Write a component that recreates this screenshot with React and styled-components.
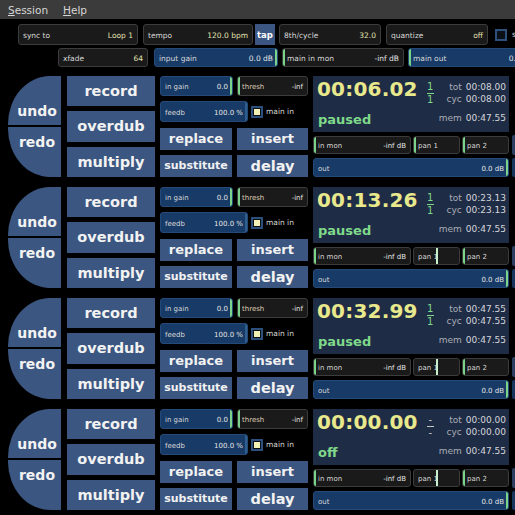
import React from 'react'
import styled, { createGlobalStyle } from 'styled-components'

const GlobalStyle = createGlobalStyle`
  html, body {
    margin: 0;
    padding: 0;
    background: #000;
    overflow: hidden;
  }
  body {
    font-family: "DejaVu Sans", "Noto Sans", sans-serif;
  }
`

const Window = styled.div`
  width: 515px;
  height: 515px;
  overflow: hidden;
  background: #000;
  display: flex;
  flex-direction: column;
`

const MenuBar = styled.div`
  flex: 0 0 19px;
  background: #3b3b3b;
  display: flex;
  align-items: center;
  gap: 15px;
  padding-left: 8px;
  font-size: 10.5px;
  color: #d6d6d6;

  u {
    text-decoration: underline;
    text-underline-offset: 1px;
  }
`

const Controls = styled.div`
  display: flex;
  flex-direction: column;
  gap: 3px;
  padding-top: 5px;
`

const ControlRow = styled.div`
  display: flex;
  align-items: center;
  flex: 0 0 ${(p) => p.$h}px;
  height: ${(p) => p.$h}px;
  padding-left: ${(p) => p.$indent}px;
  gap: 5px;
`

const SliderBox = styled.div`
  position: relative;
  flex: 0 0 ${(p) => p.$w}px;
  width: ${(p) => p.$w}px;
  height: 100%;
  box-sizing: border-box;
  border: 1px solid ${(p) => (p.$blue ? '#244a7a' : '#3c3c3c')};
  border-radius: 3px;
  background: ${(p) => (p.$blue ? '#173a66' : '#1a1a1a')};
  display: flex;
  align-items: center;
  justify-content: space-between;
  padding: 2px 4px 0 4px;
  font-size: ${(p) => p.$fs || 7.5}px;
  color: #d8d8d8;
  overflow: hidden;
  white-space: nowrap;
  margin-left: ${(p) => p.$ml || 0}px;
`

const SliderLabel = styled.span`
  position: relative;
  color: ${(p) => p.$tint || '#d8d8d8'};
`

const SliderValue = styled.span`
  position: relative;
  color: ${(p) => p.$tint || '#e4e4e4'};
`

const Marker = styled.span`
  position: absolute;
  top: 0;
  bottom: 0;
  width: 2px;
  background: ${(p) => p.$color || '#7bd389'};
`

const TapButton = styled.div`
  flex: 0 0 20px;
  height: 100%;
  background: #3b5680;
  color: #fff;
  font-weight: bold;
  font-size: 8.5px;
  display: flex;
  align-items: center;
  justify-content: center;
  margin: 0 -1px 0 -3px;
`

const Check = styled.span`
  flex: 0 0 12px;
  width: 12px;
  height: 12px;
  box-sizing: border-box;
  border: 2px solid #2c4f7c;
  background: #0c1016;
  display: flex;
  align-items: center;
  justify-content: center;
  margin-left: ${(p) => p.$ml || 0}px;

  &::after {
    content: '';
    width: 6px;
    height: 6px;
    background: ${(p) => (p.$on ? '#f2f2b4' : 'transparent')};
  }
`

const CheckLabel = styled.span`
  font-size: 7.5px;
  color: #d8d8d8;
  white-space: nowrap;
`

const LoopList = styled.div`
  display: flex;
  flex-direction: column;
  gap: 10px;
  margin-top: 9px;
`

const Loop = styled.div`
  display: flex;
  flex: 0 0 101px;
  height: 101px;
  padding-left: 8px;
`

const UndoColumn = styled.div`
  flex: 0 0 53px;
  display: flex;
  flex-direction: column;
  gap: 2px;
`

const UndoButton = styled.div`
  flex: 1;
  background: #3b5680;
  color: #f2f2f2;
  font-weight: bold;
  font-size: 14px;
  display: flex;
  justify-content: center;
  padding-left: 5px;
  align-items: ${(p) => (p.$bottom ? 'flex-start' : 'flex-end')};
  padding-top: ${(p) => (p.$bottom ? 7 : 0)}px;
  padding-bottom: ${(p) => (p.$bottom ? 0 : 6)}px;
  border-top-left-radius: ${(p) => (p.$bottom ? '0' : '42px 48px')};
  border-bottom-left-radius: ${(p) => (p.$bottom ? '42px 48px' : '0')};
`

const MainButtons = styled.div`
  flex: 0 0 88px;
  margin-left: 6px;
  display: flex;
  flex-direction: column;
  gap: 5px;
`

const Button = styled.div`
  flex: ${(p) => (p.$w ? `0 0 ${p.$w}px` : 1)};
  background: #3b5680;
  color: #f2f2f2;
  font-weight: bold;
  font-size: ${(p) => p.$fs || 14.5}px;
  display: flex;
  align-items: center;
  justify-content: center;
  white-space: nowrap;
  height: 100%;
  box-sizing: border-box;
`

const MiddleColumn = styled.div`
  flex: 0 0 148px;
  margin-left: 5px;
  display: flex;
  flex-direction: column;
  justify-content: space-between;
`

const MiddleRow = styled.div`
  display: flex;
  align-items: center;
  flex: 0 0 ${(p) => p.$h}px;
  height: ${(p) => p.$h}px;
  gap: ${(p) => p.$gap ?? 4}px;
`

const RightColumn = styled.div`
  flex: 0 0 196px;
  margin-left: 5px;
  display: flex;
  flex-direction: column;
  gap: 4px;
`

const TimePanel = styled.div`
  flex: 0 0 56px;
  background: #1f2c46;
  display: flex;
  justify-content: space-between;
  box-sizing: border-box;
  padding: 3px 3px 0 4px;
`

const TimeLeft = styled.div`
  display: flex;
  flex-direction: column;
`

const TimeLine = styled.div`
  display: flex;
  align-items: flex-start;
  gap: 9px;
`

const Clock = styled.span`
  font-size: 20px;
  line-height: 21px;
  font-weight: bold;
  color: #e8e88c;
  letter-spacing: 0.2px;
`

const Fraction = styled.span`
  display: flex;
  flex-direction: column;
  align-items: center;
  font-size: 10px;
  line-height: 10px;
  color: ${(p) => (p.$empty ? '#c8c8c8' : '#7fd98a')};
  padding-top: 3px;

  i {
    display: block;
    width: 7px;
    height: 1px;
    margin: 1px 0;
    background: ${(p) => (p.$empty ? '#c8c8c8' : '#7fd98a')};
  }
`

const LoopState = styled.span`
  font-size: 13px;
  font-weight: bold;
  color: #7fd98a;
  margin-top: 7px;
  padding-left: 1px;
`

const Info = styled.div`
  display: grid;
  grid-template-columns: auto auto;
  grid-template-rows: 12px 12px 12px;
  column-gap: 4px;
  row-gap: 0;
  align-items: center;
  justify-items: end;
  padding-top: 2px;
  font-size: 9px;
`

const InfoLabel = styled.span`
  color: #a9adb5;
  margin-top: ${(p) => p.$gapTop || 0}px;
`

const InfoValue = styled.span`
  color: #d4d6da;
  margin-top: ${(p) => p.$gapTop || 0}px;
`

const MixRow = styled.div`
  display: flex;
  flex: 0 0 ${(p) => p.$h}px;
  height: ${(p) => p.$h}px;
  gap: 2px;
`

const EdgeColumn = styled.div`
  flex: 0 0 20px;
  margin-left: 3px;
  display: flex;
  flex-direction: column;
  justify-content: flex-end;
  gap: 3px;
`

const EdgeBox = styled.div`
  flex: 0 0 ${(p) => p.$h}px;
  background: ${(p) => p.$c};
  border-radius: 2px;
`

const Slider = ({ w, label, value, blue, marker, markerColor, fs, ml, labelTint, valueTint }) => (
  <SliderBox $w={w} $blue={blue} $fs={fs} $ml={ml}>
    {marker !== undefined && (
      <Marker
        $color={markerColor}
        style={{ left: marker >= 100 ? 'auto' : `calc(${marker}% - ${marker > 0 ? 1 : 0}px)`, right: marker >= 100 ? 0 : 'auto' }}
      />
    )}
    <SliderLabel $tint={labelTint}>{label}</SliderLabel>
    <SliderValue $tint={valueTint}>{value}</SliderValue>
  </SliderBox>
)

const loops = [
  { time: '00:06.02', num: '1', den: '1', state: 'paused', tot: '00:08.00', cyc: '00:08.00', mem: '00:47.55', pan: 0 },
  { time: '00:13.26', num: '1', den: '1', state: 'paused', tot: '00:23.13', cyc: '00:23.13', mem: '00:47.55', pan: 50 },
  { time: '00:32.99', num: '1', den: '1', state: 'paused', tot: '00:47.55', cyc: '00:47.55', mem: '00:47.55', pan: 50 },
  { time: '00:00.00', num: '-', den: '-', state: 'off', tot: '00:00.00', cyc: '00:00.00', mem: '00:47.55', pan: 50 },
]

const LoopStrip = ({ loop }) => (
  <Loop>
    <UndoColumn>
      <UndoButton>undo</UndoButton>
      <UndoButton $bottom>redo</UndoButton>
    </UndoColumn>

    <MainButtons>
      <Button>record</Button>
      <Button>overdub</Button>
      <Button>multiply</Button>
    </MainButtons>

    <MiddleColumn>
      <MiddleRow $h={20}>
        <Slider w={73} label="in gain" value="0.0" blue marker={100} fs={7} />
        <Slider w={71} label="thresh" value="-inf" marker={0} fs={7} labelTint="#dccbb4" />
      </MiddleRow>
      <MiddleRow $h={21} $gap={3}>
        <Slider w={88} label="feedb" value="100.0 %" blue marker={100} markerColor="#2f5f8f" fs={7} />
        <Check $on />
        <CheckLabel>main in</CheckLabel>
      </MiddleRow>
      <MiddleRow $h={22} $gap={5}>
        <Button $w={72} $fs={13}>replace</Button>
        <Button $w={71} $fs={13}>insert</Button>
      </MiddleRow>
      <MiddleRow $h={22} $gap={5}>
        <Button $w={72} $fs={11}>substitute</Button>
        <Button $w={71} $fs={14.5}>delay</Button>
      </MiddleRow>
    </MiddleColumn>

    <RightColumn>
      <TimePanel>
        <TimeLeft>
          <TimeLine>
            <Clock>{loop.time}</Clock>
            <Fraction $empty={loop.num === '-'}>
              <span>{loop.num}</span>
              <i />
              <span>{loop.den}</span>
            </Fraction>
          </TimeLine>
          <LoopState>{loop.state}</LoopState>
        </TimeLeft>
        <Info>
          <InfoLabel>tot</InfoLabel>
          <InfoValue>{loop.tot}</InfoValue>
          <InfoLabel>cyc</InfoLabel>
          <InfoValue>{loop.cyc}</InfoValue>
          <InfoLabel $gapTop={14}>mem</InfoLabel>
          <InfoValue $gapTop={14}>{loop.mem}</InfoValue>
        </Info>
      </TimePanel>
      <MixRow $h={18}>
        <Slider w={98} label="in mon" value="-inf dB" marker={0} fs={7} />
        <Slider
          w={47}
          label="pan 1"
          value=""
          marker={loop.pan}
          markerColor={loop.pan ? '#c8f0cc' : '#7bd389'}
          fs={7}
        />
        <Slider w={47} label="pan 2" value="" marker={0} fs={7} />
      </MixRow>
      <MixRow $h={19}>
        <Slider w={196} label="out" value="0.0 dB" blue marker={100} fs={7} />
      </MixRow>
    </RightColumn>

    <EdgeColumn>
      <EdgeBox $h={20} $c="#2a3f60" />
      <EdgeBox $h={19} $c="#17365e" />
    </EdgeColumn>
  </Loop>
)

export default function App() {
  return (
    <Window>
      <GlobalStyle />
      <MenuBar>
        <span><u>S</u>ession</span>
        <span><u>H</u>elp</span>
      </MenuBar>

      <Controls>
        <ControlRow $h={21} $indent={18}>
          <Slider w={120} label="sync to" value="Loop 1" valueTint="#e2e2b0" />
          <Slider w={110} label="tempo" value="120.0 bpm" valueTint="#e2e2b0" />
          <TapButton>tap</TapButton>
          <Slider w={102} label="8th/cycle" value="32.0" valueTint="#e2e2b0" />
          <Slider w={102} label="quantize" value="off" valueTint="#e2e2b0" />
          <Check $ml={2} />
          <CheckLabel>sync</CheckLabel>
        </ControlRow>
        <ControlRow $h={19} $indent={58}>
          <Slider w={90} label="xfade" value="64" valueTint="#e2e2b0" />
          <Slider w={124} label="input gain" value="0.0 dB" blue marker={100} ml={1} />
          <Slider w={122} label="main in mon" value="-inf dB" marker={0} ml={-1} />
          <Slider w={130} label="main out" value="0.0 dB" blue marker={0} ml={-1} />
        </ControlRow>
      </Controls>

      <LoopList>
        {loops.map((loop, i) => (
          <LoopStrip key={i} loop={loop} />
        ))}
      </LoopList>
    </Window>
  )
}
